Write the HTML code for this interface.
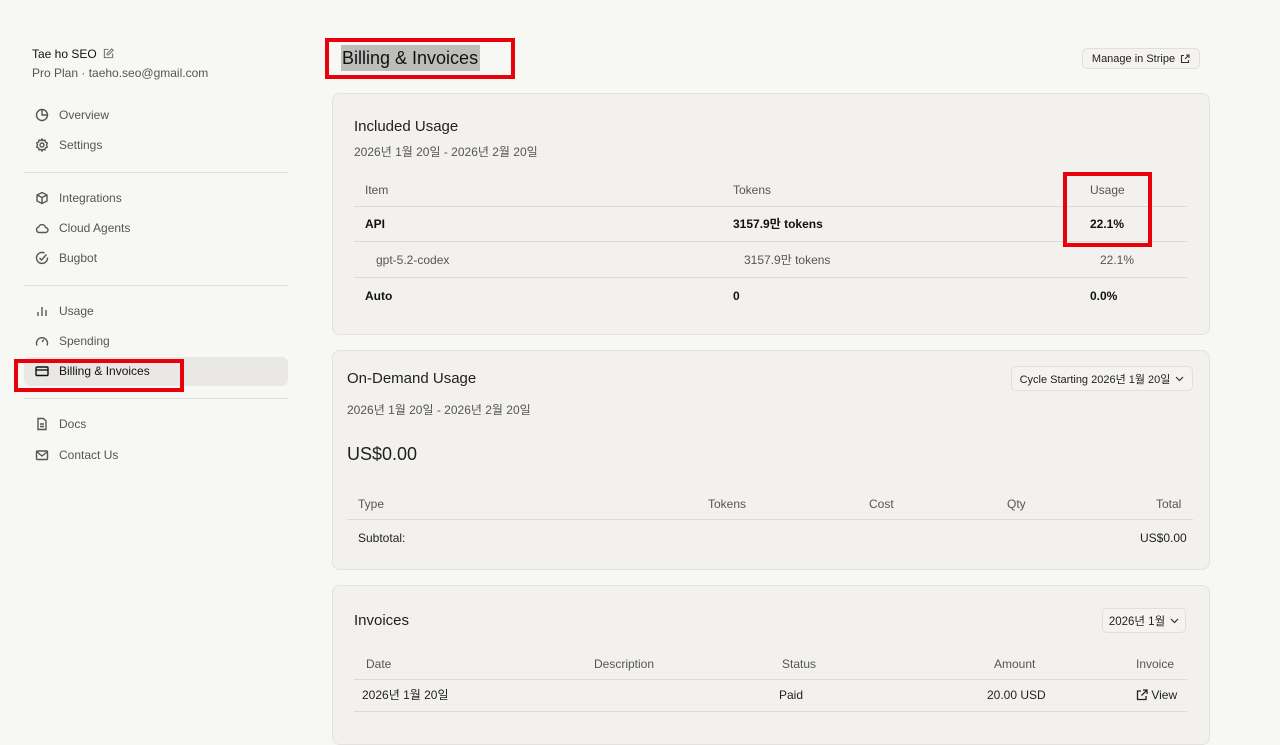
<!DOCTYPE html>
<html><head><meta charset="utf-8">
<style>
*{box-sizing:border-box;margin:0;padding:0}
body{width:1280px;height:727px;overflow:hidden;background:#f7f7f4;font-family:"Liberation Sans","Noto Sans CJK KR",sans-serif;color:#1f1f1f;position:relative;font-size:12px}
.a{position:absolute;white-space:nowrap;line-height:14px}
.nav{position:absolute;left:35px;display:flex;align-items:center;gap:10px;color:#555;font-size:12px;height:20px}
.nav svg{width:14px;height:14px;stroke:#555;fill:none;stroke-width:1.4}
.div{position:absolute;left:24px;width:264px;height:1px;background:#e2e1dd}
.card{position:absolute;background:#f2f1ed;border:1px solid #e3e2de;border-radius:8px}
.line{position:absolute;height:1px;background:#dcdbd6}
.red{position:absolute;border:4px solid #e8000b}
.b{font-weight:bold;color:#111}
.g{color:#555}
.btn{position:absolute;border:1px solid #e0dfda;border-radius:5px;background:#f4f3ef;font-size:11.5px;display:flex;align-items:center;justify-content:center;gap:5px;white-space:nowrap}
</style></head><body>
<div class="a" style="left:32px;top:47px;font-size:12px;color:#111">Tae ho SEO <svg width="11" height="11" viewBox="0 0 12 12" style="vertical-align:-1px;margin-left:3px" fill="none" stroke="#777" stroke-width="1.2"><path d="M6 1.5H1.5v9h9V6"/><path d="M9.5 1 11 2.5 6 7.5H4.5V6z"/></svg></div>
<div class="a" style="left:32px;top:66px;color:#555">Pro Plan · taeho.seo@gmail.com</div>

<div style="position:absolute;left:24px;top:357px;width:264px;height:29px;background:#e9e8e4;border-radius:6px"></div>

<div class="nav" style="top:105px"><svg viewBox="0 0 14 14"><circle cx="7" cy="7" r="5.5"/><path d="M7 1.5V7h5.5"/></svg>Overview</div>
<div class="nav" style="top:135px"><svg viewBox="0 0 14 14"><circle cx="7" cy="7" r="2"/><path d="M7 1l1 1.6 1.9-.5.5 1.9L12.3 5l-.8 2 .8 2-1.9 1-.5 1.9-1.9-.5L7 13l-1-1.6-1.9.5-.5-1.9L1.7 9l.8-2-.8-2 1.9-1 .5-1.9 1.9.5z"/></svg>Settings</div>
<div class="div" style="top:172px"></div>
<div class="nav" style="top:188px"><svg viewBox="0 0 14 14"><path d="M7 1.5l5 2.5v6L7 12.5 2 10V4z"/><path d="M2 4l5 2.5L12 4M7 6.5v6"/></svg>Integrations</div>
<div class="nav" style="top:218px"><svg viewBox="0 0 14 14"><path d="M4 11.5h6.5a2.5 2.5 0 0 0 0-5 3.5 3.5 0 0 0-6.8-.5A2.8 2.8 0 0 0 4 11.5z"/></svg>Cloud Agents</div>
<div class="nav" style="top:248px"><svg viewBox="0 0 14 14"><path d="M12.5 6.5A5.5 5.5 0 1 1 9.5 2"/><path d="M4.5 7l2 2 5-5.5"/></svg>Bugbot</div>
<div class="div" style="top:285px"></div>
<div class="nav" style="top:301px"><svg viewBox="0 0 14 14"><path d="M3 12V8M7 12V3M11 12V6"/></svg>Usage</div>
<div class="nav" style="top:331px"><svg viewBox="0 0 14 14"><path d="M2 11.5a5.5 5.5 0 1 1 10 0"/><path d="M7 8l2-2.5"/></svg>Spending</div>
<div class="nav" style="top:361px;color:#111"><svg viewBox="0 0 14 14" style="stroke:#111"><rect x="1" y="3" width="12" height="8.5" rx="1"/><path d="M1 6h12"/></svg>Billing &amp; Invoices</div>
<div class="div" style="top:398px"></div>
<div class="nav" style="top:414px"><svg viewBox="0 0 14 14"><path d="M3 1.5h5.5L11 4v8.5H3z"/><path d="M5 7h4M5 9.5h4"/></svg>Docs</div>
<div class="nav" style="top:445px"><svg viewBox="0 0 14 14"><rect x="1.5" y="3" width="11" height="8.5" rx="1"/><path d="M1.5 3.5 7 8l5.5-4.5"/></svg>Contact Us</div>
<div class="red" style="left:14px;top:359px;width:170px;height:33px"></div>

<div class="a" style="left:341px;top:45px;height:26px;padding:0 2px 0 1px;background:#bdbdbb;font-size:18px;line-height:27px;color:#111">Billing &amp; Invoices</div>
<div class="red" style="left:325px;top:38px;width:190px;height:41px"></div>
<div class="btn" style="left:1082px;top:48px;width:118px;height:21px;font-size:11px">Manage in Stripe <svg width="10" height="10" viewBox="0 0 10 10" fill="none" stroke="#333" stroke-width="1.1"><path d="M4 1.5H1.5v7h7V6M6 1h3v3M9 1 5 5"/></svg></div>

<div class="card" style="left:332px;top:93px;width:878px;height:242px"></div>
<div class="a" style="left:354px;top:118px;font-size:15px;line-height:17px">Included Usage</div>
<div class="a g" style="left:354px;top:145px">2026년 1월 20일 - 2026년 2월 20일</div>
<div class="a g" style="left:365px;top:183px">Item</div>
<div class="a g" style="left:733px;top:183px">Tokens</div>
<div class="a g" style="left:1090px;top:183px">Usage</div>
<div class="line" style="left:354px;top:206px;width:833px"></div>
<div class="a b" style="left:365px;top:217px">API</div>
<div class="a b" style="left:733px;top:217px">3157.9만 tokens</div>
<div class="a b" style="left:1090px;top:217px">22.1%</div>
<div class="line" style="left:354px;top:241px;width:833px"></div>
<div class="a g" style="left:376px;top:253px">gpt-5.2-codex</div>
<div class="a g" style="left:744px;top:253px">3157.9만 tokens</div>
<div class="a g" style="left:1100px;top:253px">22.1%</div>
<div class="line" style="left:354px;top:277px;width:833px"></div>
<div class="a b" style="left:365px;top:289px">Auto</div>
<div class="a b" style="left:733px;top:289px">0</div>
<div class="a b" style="left:1090px;top:289px">0.0%</div>
<div class="red" style="left:1063px;top:172px;width:89px;height:75px"></div>

<div class="card" style="left:332px;top:350px;width:878px;height:220px"></div>
<div class="a" style="left:347px;top:370px;font-size:15px;line-height:17px">On-Demand Usage</div>
<div class="btn" style="left:1011px;top:366px;width:182px;height:25px;font-size:11px">Cycle Starting 2026년 1월 20일 <svg width="9" height="6" viewBox="0 0 9 6" fill="none" stroke="#333" stroke-width="1.2"><path d="M1 1l3.5 3.5L8 1"/></svg></div>
<div class="a g" style="left:347px;top:403px">2026년 1월 20일 - 2026년 2월 20일</div>
<div class="a" style="left:347px;top:444px;font-size:18px;line-height:20px">US$0.00</div>
<div class="a g" style="left:358px;top:497px">Type</div>
<div class="a g" style="left:708px;top:497px">Tokens</div>
<div class="a g" style="left:869px;top:497px">Cost</div>
<div class="a g" style="left:1007px;top:497px">Qty</div>
<div class="a g" style="left:1156px;top:497px">Total</div>
<div class="line" style="left:347px;top:519px;width:846px"></div>
<div class="a" style="left:358px;top:531px">Subtotal:</div>
<div class="a" style="left:1140px;top:531px">US$0.00</div>

<div class="card" style="left:332px;top:585px;width:878px;height:160px"></div>
<div class="a" style="left:354px;top:612px;font-size:15px;line-height:17px">Invoices</div>
<div class="btn" style="left:1102px;top:608px;width:84px;height:25px">2026년 1월 <svg width="9" height="6" viewBox="0 0 9 6" fill="none" stroke="#333" stroke-width="1.2"><path d="M1 1l3.5 3.5L8 1"/></svg></div>
<div class="a g" style="left:366px;top:657px">Date</div>
<div class="a g" style="left:594px;top:657px">Description</div>
<div class="a g" style="left:782px;top:657px">Status</div>
<div class="a g" style="left:994px;top:657px">Amount</div>
<div class="a g" style="left:1136px;top:657px">Invoice</div>
<div class="line" style="left:354px;top:679px;width:833px"></div>
<div class="a" style="left:362px;top:688px">2026년 1월 20일</div>
<div class="a" style="left:779px;top:688px">Paid</div>
<div class="a" style="left:987px;top:688px">20.00 USD</div>
<div class="a" style="left:1136px;top:688px"><svg width="12" height="12" viewBox="0 0 12 12" fill="none" stroke="#222" stroke-width="1.3" style="vertical-align:-2px"><path d="M5 2H1.5v8.5H10V7M7 1h4v4M11 1 5.5 6.5"/></svg> View</div>
<div class="line" style="left:354px;top:711px;width:833px"></div>
</body></html>
